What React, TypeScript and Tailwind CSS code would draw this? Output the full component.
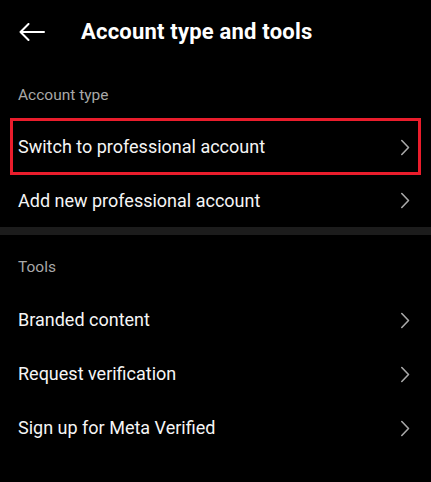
export default function App() {
  const font = { fontFamily: 'Roboto, "Noto Sans", sans-serif' };

  const Chevron = () => (
    <svg width="10" height="17" viewBox="0 0 10 17" fill="none" className="shrink-0">
      <path d="M1.8 1.5 L8.5 8.5 L1.8 15.5" stroke="#a8a8a8" strokeWidth="1.6" strokeLinecap="round" strokeLinejoin="round" />
    </svg>
  );

  const Row = ({ label, marked, h = 'h-[54px]' }: { label: string; marked?: boolean; h?: string }) => (
    <div className={`relative ${h} flex items-center justify-between pl-[18px] pr-[21px]`}>
      <span className="text-[18px] text-[#f5f5f5] leading-none">{label}</span>
      <Chevron />
      {marked && (
        <div className="absolute left-[10px] right-[10px] -top-[2px] -bottom-[1px] border-[3px] border-[#ea1d2c] pointer-events-none" />
      )}
    </div>
  );

  return (
    <div className="w-[431px] h-[482px] bg-black text-white overflow-hidden" style={font}>
      {/* header */}
      <div className="h-16 flex items-center pl-[19px]">
        <svg width="26" height="18" viewBox="0 0 26 18" fill="none">
          <path d="M25 9 H1.5 M9.5 1 L1.5 9 L9.5 17" stroke="#fff" strokeWidth="2" strokeLinecap="round" strokeLinejoin="round" />
        </svg>
        <h1 className="ml-[36px] text-[22px] font-bold leading-none tracking-[0.2px]">Account type and tools</h1>
      </div>

      {/* account type */}
      <div className="pt-[21px] pb-[15px] pl-[18px] text-[15.5px] leading-5 text-[#a8a8a8]">Account type</div>
      <Row label="Switch to professional account" marked />
      <Row label="Add new professional account" h="h-[53px]" />

      <div className="h-2 bg-[#1c1c1c]" />

      {/* tools */}
      <div className="pt-[22px] pb-[16px] pl-[18px] text-[15.5px] leading-5 text-[#a8a8a8]">Tools</div>
      <Row label="Branded content" />
      <Row label="Request verification" />
      <Row label="Sign up for Meta Verified" />
    </div>
  );
}
